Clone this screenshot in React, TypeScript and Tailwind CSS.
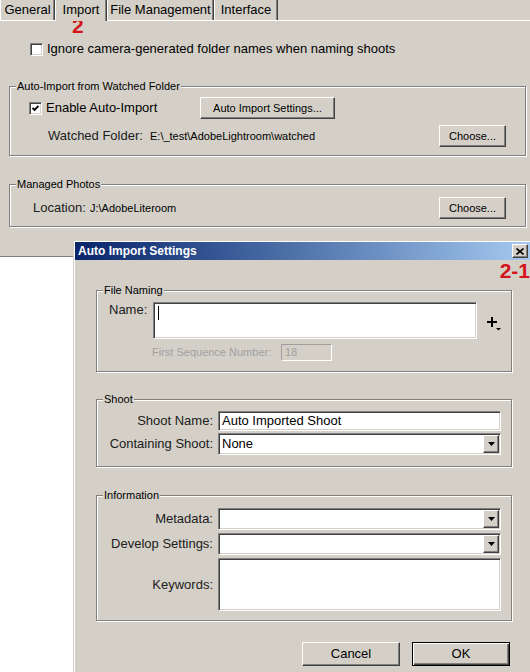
const raised =
  "border border-t-white border-l-white border-r-[#404040] border-b-[#404040] shadow-[inset_-1px_-1px_0_#808080] bg-[#d4d0c8]";
const sunken =
  "border border-t-[#808080] border-l-[#808080] border-r-white border-b-white shadow-[inset_1px_1px_0_#404040,inset_-1px_-1px_0_#d4d0c8]";

function Checkbox({ checked }: { checked?: boolean }) {
  return (
    <span className={`${sunken} w-[13px] h-[13px] bg-white flex items-center justify-center shrink-0`}>
      {checked && (
        <svg width="7" height="7" viewBox="0 0 7 7">
          <polyline points="0.5,3 2.5,5 6.5,1" fill="none" stroke="black" strokeWidth="1.8" />
        </svg>
      )}
    </span>
  );
}

function Button({ label, className = "" }: { label: string; className?: string }) {
  return (
    <div className={`${raised} flex items-center justify-center text-[11px] ${className}`}>{label}</div>
  );
}

function Group({
  label,
  className = "",
  children,
}: {
  label: string;
  className?: string;
  children: React.ReactNode;
}) {
  return (
    <fieldset className={`border border-[#808080] shadow-[inset_1px_1px_0_#fff,1px_1px_0_#fff] ${className}`}>
      <legend className="ml-[6px] px-[1px] text-[11px] leading-[14px] bg-[#d4d0c8]">{label}</legend>
      {children}
    </fieldset>
  );
}

function Select({ value, className = "" }: { value?: string; className?: string }) {
  return (
    <div className={`${sunken} bg-white flex items-stretch p-[1px] ${className}`}>
      <span className="flex-1 flex items-center pl-[2px] text-[13px]">{value}</span>
      <span className={`${raised} w-[16px] flex items-center justify-center`}>
        <svg width="7" height="4" viewBox="0 0 7 4">
          <path d="M0 0h7L3.5 4z" fill="black" />
        </svg>
      </span>
    </div>
  );
}

function Tab({ label, width, active }: { label: string; width: string; active?: boolean }) {
  return (
    <div
      className={`${width} flex justify-center border-l border-white border-r border-r-[#404040] shadow-[inset_-1px_0_0_#808080] text-[13px] leading-[16px] ${
        active ? "relative z-10 -mb-px bg-[#d4d0c8] items-start pt-[2px]" : "items-end pb-[2px]"
      }`}
    >
      {label}
    </div>
  );
}

function Preferences() {
  return (
    <div className="relative h-[257px] bg-[#d4d0c8] border-b border-[#808080]">
      <div className="flex h-[21px] border-b border-white">
        <Tab label="General" width="w-[55px]" />
        <Tab label="Import" width="w-[52px]" active />
        <Tab label="File Management" width="w-[107px]" />
        <Tab label="Interface" width="w-[64px]" />
      </div>
      <span className="absolute left-[72px] top-[18px] text-[21px] font-bold leading-[16px] text-[#d4141c]">2</span>

      <div className="flex items-center gap-[4px] h-[16px] mt-[20px] pl-[30px] text-[13px]">
        <Checkbox />
        <span>Ignore camera-generated folder names when naming shoots</span>
      </div>

      <Group label="Auto-Import from Watched Folder" className="mx-[9px] mt-[22px] w-[517px] pb-[8px]">
        <div className="px-[19px]">
          <div className="flex items-center h-[22px] mt-[4px]">
            <div className="w-[171px] flex items-center gap-[4px] text-[13px]">
              <Checkbox checked />
              <span>Enable Auto-Import</span>
            </div>
            <Button label="Auto Import Settings..." className="w-[135px] h-[22px]" />
          </div>
          <div className="flex items-center h-[22px] mt-[6px]">
            <span className="ml-[19px] w-[102px] whitespace-nowrap text-[13px] text-[#202020]">Watched Folder:</span>
            <span className="text-[11px]">E:\_test\AdobeLightroom\watched</span>
            <Button label="Choose..." className="ml-auto w-[67px] h-[22px]" />
          </div>
        </div>
      </Group>

      <Group label="Managed Photos" className="mx-[9px] mt-[21px] w-[517px] pb-[7px]">
        <div className="px-[19px]">
          <div className="flex items-center h-[22px] mt-[6px]">
            <span className="ml-[4px] w-[57px] text-[13px] text-[#202020]">Location:</span>
            <span className="text-[11px]">J:\AdobeLiteroom</span>
            <Button label="Choose..." className="ml-auto w-[67px] h-[22px]" />
          </div>
        </div>
      </Group>
    </div>
  );
}

function Field({ label, children }: { label: string; children: React.ReactNode }) {
  return (
    <div className="flex items-center">
      <span className="w-[121px] pr-[5px] text-right text-[13px] text-[#202020]">{label}</span>
      {children}
    </div>
  );
}

function AutoImportDialog() {
  return (
    <div className="absolute left-[73px] top-[240px] w-[458px] h-[440px] bg-[#d4d0c8] border-l border-t border-[#d4d0c8] shadow-[inset_1px_1px_0_#fff] pt-px pl-px">
      <div className="h-[18px] flex items-center justify-between bg-gradient-to-r from-[#0a246a] to-[#a6caf0] pl-[3px] pr-[3px]">
        <span className="text-white text-[12px] font-bold">Auto Import Settings</span>
        <span className={`${raised} w-[16px] h-[14px] flex items-center justify-center`}>
          <svg width="8" height="7" viewBox="0 0 8 7">
            <path d="M0.5 0.5L7.5 6.5M7.5 0.5L0.5 6.5" stroke="black" strokeWidth="1.6" />
          </svg>
        </span>
      </div>
      <span className="absolute right-[1px] top-[20px] text-[21px] font-bold leading-[20px] text-[#d4141c]">2-1</span>

      <div className="pl-[21px]">
        <Group label="File Naming" className="mt-[23px] w-[416px] pb-[10px]">
          <div className="pl-[12px]">
            <div className="flex items-start mt-[5px]">
              <span className="w-[44px] text-[13px] leading-[16px] text-[#202020]">Name:</span>
              <div className={`${sunken} bg-white w-[324px] h-[37px] pl-[4px] pt-[3px]`}>
                <span className="block w-px h-[14px] bg-black" />
              </div>
              <svg className="ml-[10px] mt-[15px]" width="14" height="14" viewBox="0 0 14 14">
                <path d="M5 0v10M0 5h10" stroke="black" strokeWidth="2" />
                <path d="M9 11h5l-2.5 2.5z" fill="black" />
              </svg>
            </div>
            <div className="flex items-center mt-[5px] pl-[43px]">
              <span className="w-[129px] text-[11px] text-[#a0a0a0]">First Sequence Number:</span>
              <div className="w-[51px] h-[17px] border border-t-[#a0a0a0] border-l-[#a0a0a0] border-r-white border-b-white bg-[#d4d0c8] text-[11px] text-[#a0a0a0] pl-[3px] leading-[15px]">
                18
              </div>
            </div>
          </div>
        </Group>

        <Group label="Shoot" className="mt-[20px] w-[416px] pb-[11px]">
          <div className="flex flex-col gap-[2px] mt-[5px]">
            <Field label="Shoot Name:">
              <div className={`${sunken} bg-white w-[283px] h-[20px] pl-[3px] flex items-center text-[13px]`}>
                Auto Imported Shoot
              </div>
            </Field>
            <Field label="Containing Shoot:">
              <Select value="None" className="w-[283px] h-[22px]" />
            </Field>
          </div>
        </Group>

        <Group label="Information" className="mt-[21px] w-[416px] pb-[9px]">
          <div className="flex flex-col gap-[3px] mt-[6px]">
            <Field label="Metadata:">
              <Select className="w-[283px] h-[22px]" />
            </Field>
            <Field label="Develop Settings:">
              <Select className="w-[283px] h-[22px]" />
            </Field>
            <Field label="Keywords:">
              <div className={`${sunken} bg-white w-[283px] h-[53px]`} />
            </Field>
          </div>
        </Group>

        <div className="flex justify-end gap-[12px] w-[416px] pr-[2px] mt-[21px]">
          <div className={`${raised} w-[98px] h-[24px] flex items-center justify-center text-[13px]`}>Cancel</div>
          <div className="w-[98px] h-[24px] border border-black bg-[#d4d0c8] shadow-[inset_1px_1px_0_#fff,inset_-1px_-1px_0_#404040,inset_-2px_-2px_0_#808080] flex items-center justify-center text-[13px]">
            OK
          </div>
        </div>
      </div>
    </div>
  );
}

export default function App() {
  return (
    <div className="relative w-[530px] h-[672px] overflow-hidden bg-white text-black font-['Liberation_Sans',Arial,sans-serif]">
      <Preferences />
      <AutoImportDialog />
    </div>
  );
}
